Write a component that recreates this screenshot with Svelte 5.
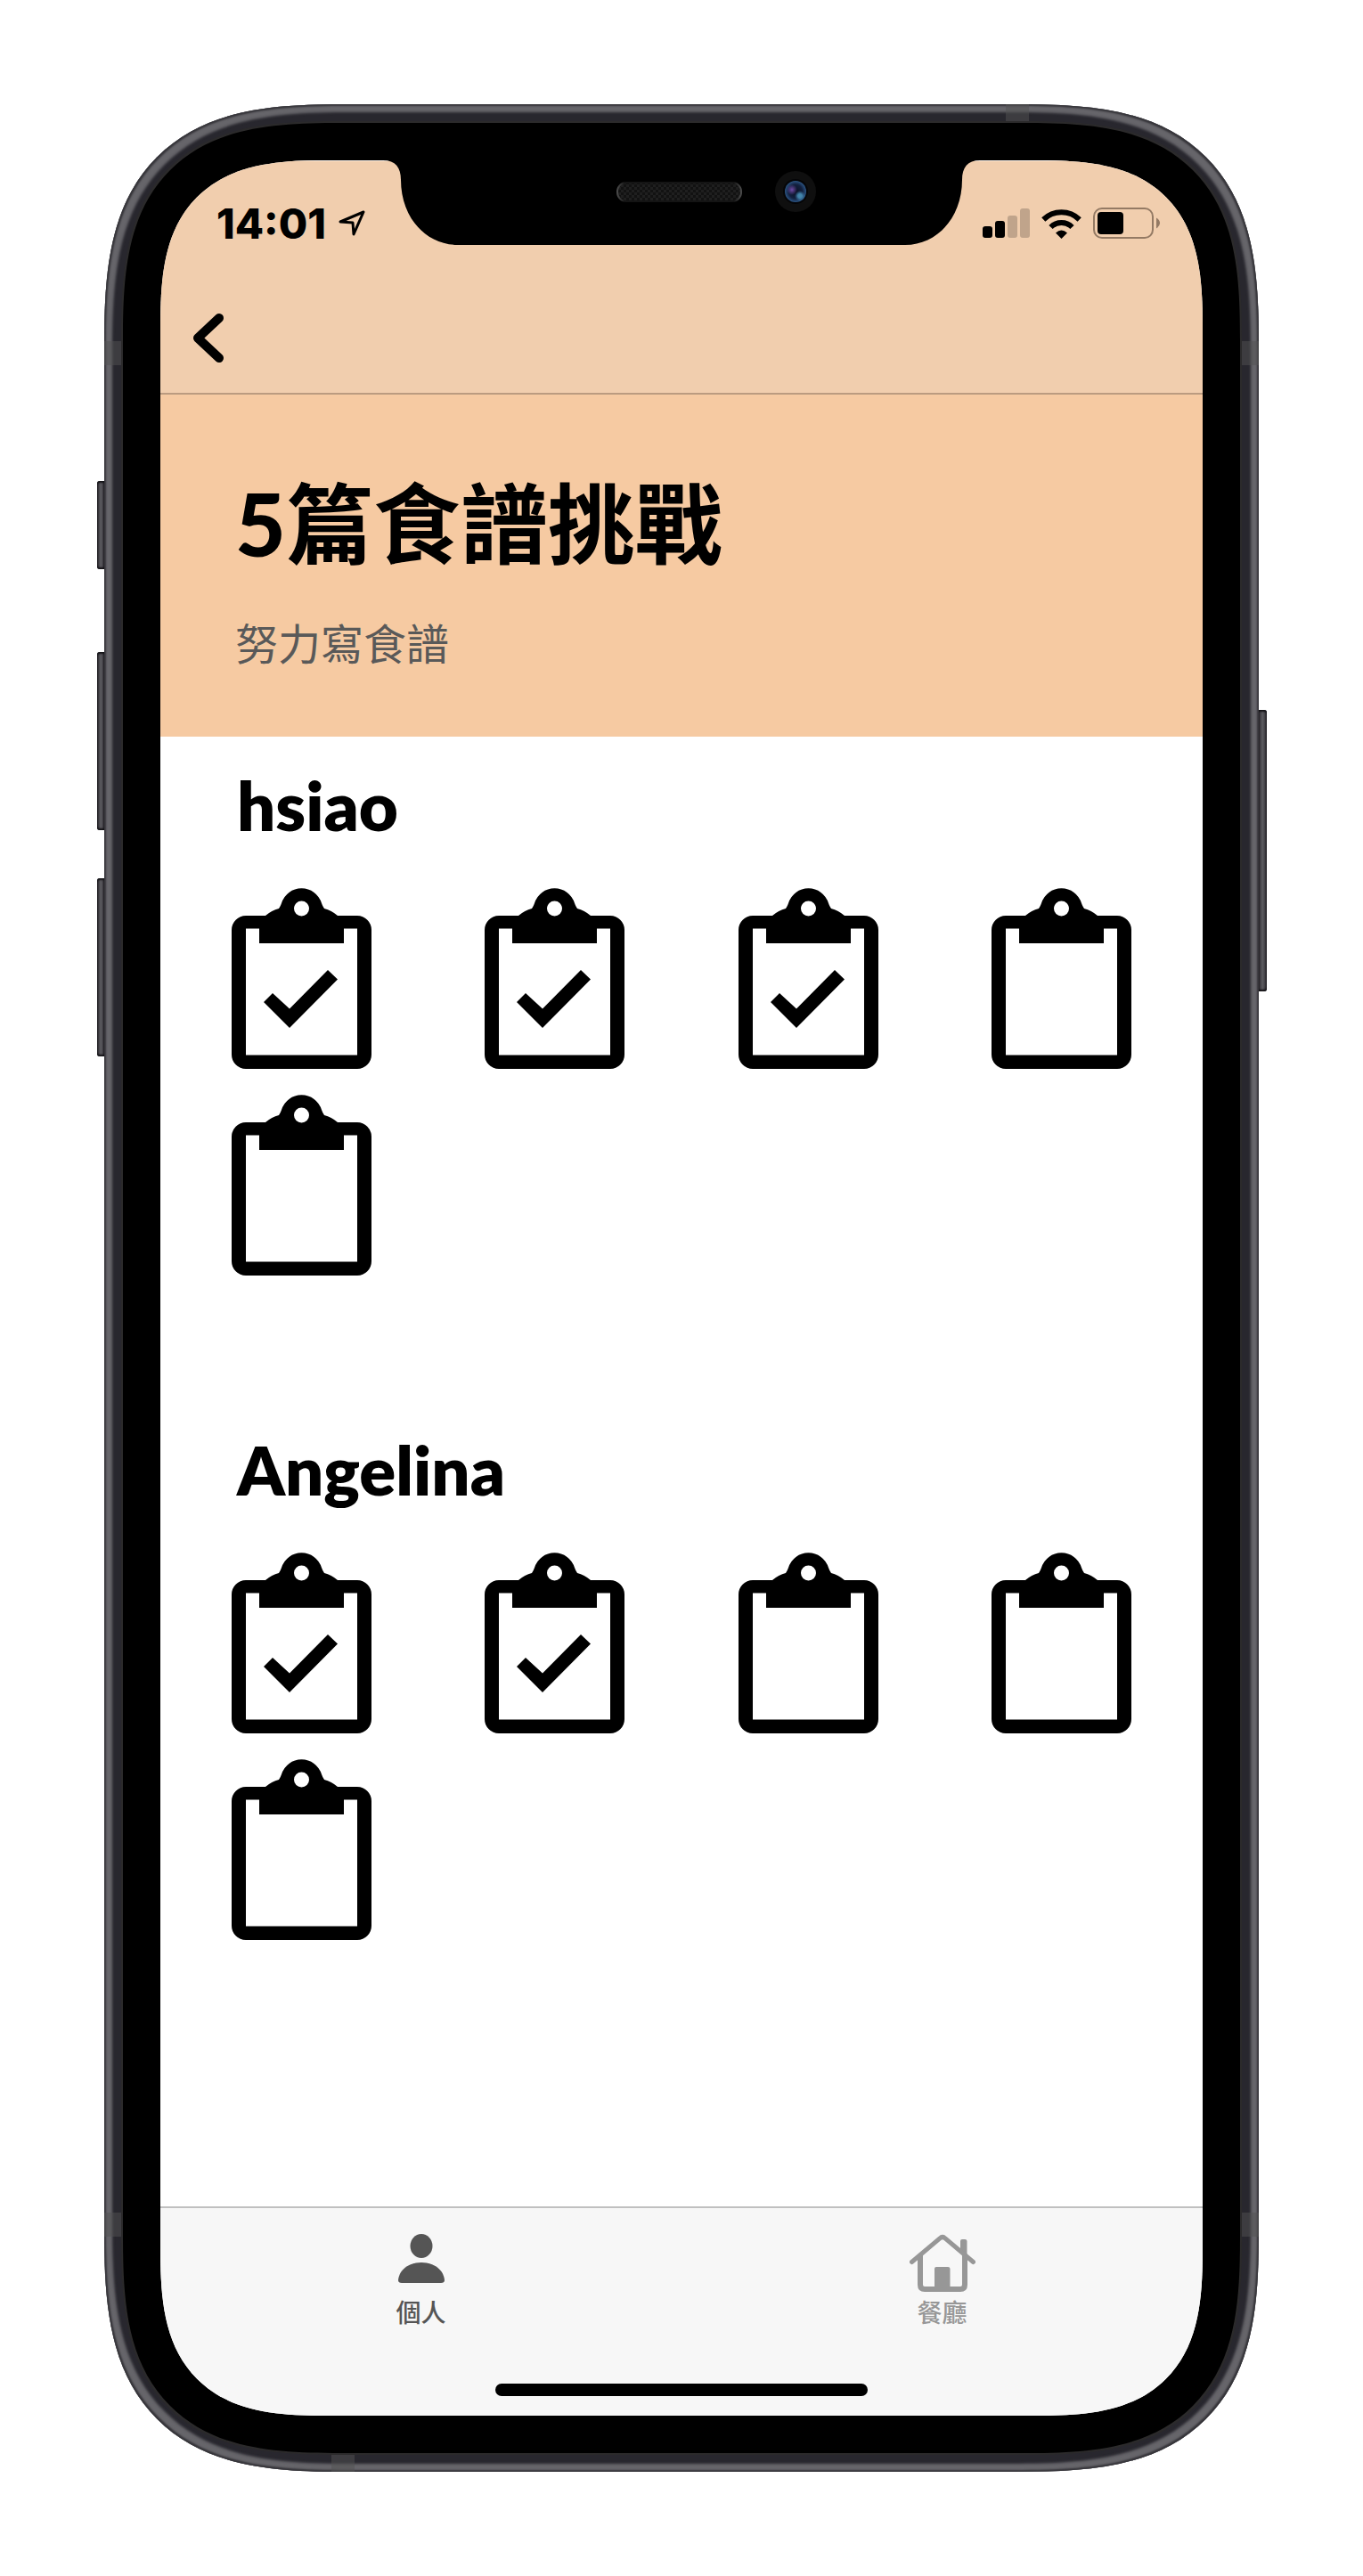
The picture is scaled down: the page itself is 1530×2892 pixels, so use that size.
<script>
  const groups = [
    { name: 'hsiao', done: 3, total: 5 },
    { name: 'Angelina', done: 2, total: 5 }
  ];
</script>

<div class="page">
  <div class="phone">
    <span class="key silent"></span>
    <span class="key volume-up"></span>
    <span class="key volume-down"></span>
    <span class="key power"></span>
    <span class="band top"></span>
    <span class="band bottom"></span>
    <span class="band left upper"></span>
    <span class="band left lower"></span>
    <span class="band right upper"></span>
    <span class="band right lower"></span>

    <div class="bezel">
      <div class="screen">
        <svg class="notch" viewBox="0 0 670 95" aria-hidden="true">
          <defs>
            <pattern id="mesh" width="6" height="6" patternUnits="userSpaceOnUse">
              <rect width="6" height="6" fill="#121212" />
              <rect width="3" height="3" fill="#1f1f1f" />
              <rect x="3" y="3" width="3" height="3" fill="#1f1f1f" />
            </pattern>
            <linearGradient id="rim" x1="0" x2="1" y1="0" y2="0">
              <stop offset="0" stop-color="#4a4a4a" />
              <stop offset="0.06" stop-color="#141414" />
              <stop offset="0.94" stop-color="#141414" />
              <stop offset="1" stop-color="#4a4a4a" />
            </linearGradient>
            <radialGradient id="violet">
              <stop offset="0" stop-color="#6e4aa4" />
              <stop offset="1" stop-color="#6e4aa4" stop-opacity="0" />
            </radialGradient>
            <radialGradient id="cyan">
              <stop offset="0" stop-color="#4688ac" />
              <stop offset="0.4" stop-color="#4080a6" />
              <stop offset="1" stop-color="#336a98" stop-opacity="0" />
            </radialGradient>
            <radialGradient id="lens">
              <stop offset="0" stop-color="#0a0f22" />
              <stop offset="0.65" stop-color="#13213f" />
              <stop offset="1" stop-color="#2b5483" />
            </radialGradient>
          </defs>
          <path d="M0 0C14 0 20 8 20 22C20 64 48 95 84 95H586C622 95 650 64 650 22C650 8 656 0 670 0Z" />
          <rect x="263" y="25" width="139" height="21" rx="10" fill="url(#mesh)" stroke="url(#rim)" stroke-width="2" />
          <circle cx="463" cy="35" r="23" fill="#0f0f0f" />
          <circle cx="463" cy="35" r="14" fill="#050507" />
          <circle cx="463" cy="35" r="12" fill="url(#lens)" />
          <circle cx="459" cy="33" r="6" fill="url(#violet)" />
          <circle cx="468" cy="40" r="6" fill="url(#cyan)" />
        </svg>

        <header class="bar">
          <div class="status">
            <div class="clock">
              <time>14:01</time>
              <svg width="31" height="30" viewBox="0 0 31 30" role="img" aria-label="Location">
                <path d="M2 13L28 2L17 27L16 14Z" fill="none" stroke="#000" stroke-width="3" stroke-linejoin="round" />
              </svg>
            </div>
            <div class="indicators">
              <svg width="53" height="34" viewBox="0 0 53 34" role="img" aria-label="Signal">
                <rect y="20" width="11" height="13" rx="3" />
                <rect x="14" y="14" width="11" height="19" rx="3" />
                <rect x="28" y="8" width="11" height="25" rx="3" opacity="0.2" />
                <rect x="42" y="0" width="11" height="33" rx="3" opacity="0.2" />
              </svg>
              <svg width="45" height="34" viewBox="0 0 45 34" role="img" aria-label="Wi-Fi">
                <g fill="none" stroke="#000" stroke-width="6">
                  <path d="M2.300 12.500A29 29 0 0 1 42.700 12.500" />
                  <path d="M10.500 21A17 17 0 0 1 34.500 21" />
                </g>
                <path d="M22.500 34L16 27.500Q22.500 21.500 29 27.500Z" />
              </svg>
              <svg width="76" height="36" viewBox="0 0 76 36" role="img" aria-label="Battery">
                <rect x="1" y="1" width="66" height="33" rx="9" fill="none" stroke="#947a64" stroke-width="2" />
                <rect x="5" y="5" width="29" height="25" rx="4" />
                <path d="M71 11.500Q75 14 75 17.500Q75 21 71 23.500Z" fill="#947a64" />
              </svg>
            </div>
          </div>
          <nav class="nav">
            <button class="back" type="button" aria-label="返回">
              <svg width="36" height="57" viewBox="0 0 36 57" aria-hidden="true">
                <path d="M30 6L6 28.500L30 51" fill="none" stroke="#000" stroke-width="10" stroke-linecap="round" stroke-linejoin="round" />
              </svg>
            </button>
          </nav>
        </header>

        <section class="hero">
          <h1><b>5</b>篇食譜挑戰</h1>
          <p>努力寫食譜</p>
        </section>

        <main>
          {#each groups as group}
            <section class="member">
              <h2>{group.name}</h2>
              <ul>
                {#each Array(group.total) as _, i}
                  <li>
                    <svg viewBox="0 0 157 204" role="img" aria-label={i < group.done ? '完成' : '未完成'}>
                      <path
                        fill-rule="evenodd"
                        d="M16 32H38Q45 26 53 24Q55 21 56 18A23.500 23.500 0 0 1 101 18Q102 21 104 24Q112 26 119 32H141A16 16 0 0 1 157 48V188A16 16 0 0 1 141 204H16A16 16 0 0 1 0 188V48A16 16 0 0 1 16 32ZM16 46.500V188.500H141V46.500H126V63H31V46.500ZM70 24A8.500 8.500 0 1 0 87 24A8.500 8.500 0 1 0 70 24Z"
                      />
                      {#if i < group.done}
                        <path d="M36 129L46 119L65 136.500L108 93L119 103.500L65 158Z" />
                      {/if}
                    </svg>
                  </li>
                {/each}
              </ul>
            </section>
          {/each}
        </main>

        <footer>
          <nav class="tabs">
            <a class="active" href="#personal" aria-current="page">
              <svg width="52" height="66" viewBox="0 0 52 66" aria-hidden="true">
                <ellipse cx="26" cy="13.500" rx="12.500" ry="13.500" />
                <path d="M0 52C1 40 12 32 26 32C40 32 51 40 52 52Q52 55 48 55H4Q0 55 0 52Z" />
              </svg>
              <span>個人</span>
            </a>
            <a href="#restaurant">
              <svg width="74" height="66" viewBox="0 0 74 66" aria-hidden="true">
                <path d="M57 8Q57 6 59 6H62Q64.500 6 64.500 8V27L57 21Z" />
                <path d="M28 39Q28 37 30 37H43Q45.500 37 45.500 39V62H28Z" />
                <path d="M12 24V57Q12 62 17 62H57Q62 62 62 57V24" fill="none" stroke="currentColor" stroke-width="6" />
                <path d="M2.500 31.500L34 5Q37 2 40 5L71.500 31.500" fill="none" stroke="currentColor" stroke-width="5" stroke-linecap="round" />
              </svg>
              <span>餐廳</span>
            </a>
          </nav>
          <div class="home-indicator"></div>
        </footer>
      </div>
    </div>
  </div>
</div>

<style>
  :global(body) {
    margin: 0;
    background: #fff;
  }

  .page {
    box-sizing: border-box;
    padding: 117px 117px 118px;
    font-family: Lato, 'Noto Sans CJK TC', sans-serif;
    color: #000;
  }

  .phone {
    position: relative;
    box-sizing: border-box;
    max-width: 1296px;
    margin: 0 auto;
    padding: 21px;
    border-radius: 195px;
    background: #28272e;
    box-shadow:
      inset 0 0 2px 2px #353439,
      inset 0 0 3px 9px #66656a;
  }

  .bezel {
    padding: 42px;
    border-radius: 176px;
    background: #000;
    box-shadow: 0 0 0 2px #2b2a2b;
  }

  .screen {
    position: relative;
    display: flex;
    flex-direction: column;
    min-height: 2532px;
    overflow: hidden;
    border-radius: 142px;
    background: #fff;
  }

  @supports (corner-shape: superellipse(1.5)) {
    .phone {
      border-radius: 273px;
      corner-shape: superellipse(1.5);
    }

    .bezel {
      border-radius: 244px;
      corner-shape: superellipse(1.5);
    }

    .screen {
      border-radius: 190px;
      corner-shape: superellipse(1.5);
    }
  }

  /* Hardware keys on the sides of the frame */
  .key {
    position: absolute;
    left: -8px;
    width: 8px;
    border-radius: 3px 0 0 3px;
    background: linear-gradient(90deg, #29282d, #5c5b60 50%, #38373c);
    box-shadow: inset 0 2px 2px #131216, inset 0 -2px 2px #131216;
  }

  .silent {
    top: 423px;
    height: 99px;
  }

  .volume-up {
    top: 615px;
    height: 200px;
  }

  .volume-down {
    top: 869px;
    height: 200px;
  }

  .power {
    left: auto;
    right: -9px;
    top: 680px;
    width: 9px;
    height: 316px;
    border-radius: 0 3px 3px 0;
    background: linear-gradient(270deg, #29282d, #5c5b60 50%, #38373c);
  }

  /* Antenna bands */
  .band {
    position: absolute;
    background: #525252;
    opacity: 0.5;
  }

  .band.top,
  .band.bottom {
    width: 26px;
    height: 19px;
  }

  .band.top {
    top: 0;
    right: 258px;
  }

  .band.bottom {
    bottom: 0;
    left: 255px;
  }

  .band.left,
  .band.right {
    width: 19px;
    height: 27px;
  }

  .band.left {
    left: 0;
  }

  .band.right {
    right: 0;
  }

  .band.upper {
    top: 266px;
  }

  .band.lower {
    bottom: 264px;
  }

  .notch {
    position: absolute;
    top: 0;
    left: 50%;
    width: 670px;
    height: 95px;
    transform: translateX(-50%);
  }

  .bar {
    border-top: 1px solid #fdf3ea;
    border-bottom: 2px solid #bb9b80;
    background: #f1ceae;
  }

  .status {
    display: flex;
    align-items: center;
    justify-content: space-between;
    height: 140px;
    padding: 0 47px 0 63px;
  }

  .clock {
    display: flex;
    align-items: center;
    gap: 14px;
  }

  time {
    font: 800 47px/56px Inter, sans-serif;
  }

  .indicators {
    display: flex;
    align-items: center;
    gap: 13px;
  }

  .nav {
    display: flex;
    align-items: flex-start;
    height: 90px;
    padding: 30px 36px 0;
  }

  .back {
    display: flex;
    padding: 0;
    border: 0;
    background: none;
  }

  .hero {
    padding: 84px 84px 68px;
    background: #f6caa2;
  }

  h1,
  h2,
  p {
    margin: 0;
  }

  h1 {
    font-size: 98px;
    font-weight: 700;
    line-height: 120px;
  }

  h1 b {
    font-weight: 900;
  }

  .hero p {
    margin-top: 40px;
    font-size: 48px;
    line-height: 72px;
    color: #595959;
  }

  main {
    flex: 1;
  }

  .member {
    padding: 29px 80px 141px;
  }

  h2 {
    padding-left: 6px;
    font-size: 76px;
    font-weight: 800;
    line-height: 96px;
  }

  ul {
    display: grid;
    grid-template-columns: repeat(4, 157px);
    justify-content: space-between;
    row-gap: 28px;
    margin: 44px 0 0;
    padding: 0;
    list-style: none;
  }

  li svg {
    display: block;
    width: 100%;
  }

  footer {
    border-top: 2px solid #c0c0c0;
    background: #f7f7f7;
  }

  .tabs {
    display: grid;
    grid-template-columns: 1fr 1fr;
    padding-top: 29px;
  }

  .tabs a {
    display: flex;
    flex-direction: column;
    align-items: center;
    color: #979797;
    text-decoration: none;
    font-size: 28px;
    font-weight: 500;
    line-height: 44px;
  }

  .tabs svg {
    fill: currentColor;
  }

  .tabs .active {
    color: #555;
  }

  .home-indicator {
    width: 418px;
    height: 14px;
    margin: 58px auto 22px;
    border-radius: 7px;
    background: #000;
  }
</style>
